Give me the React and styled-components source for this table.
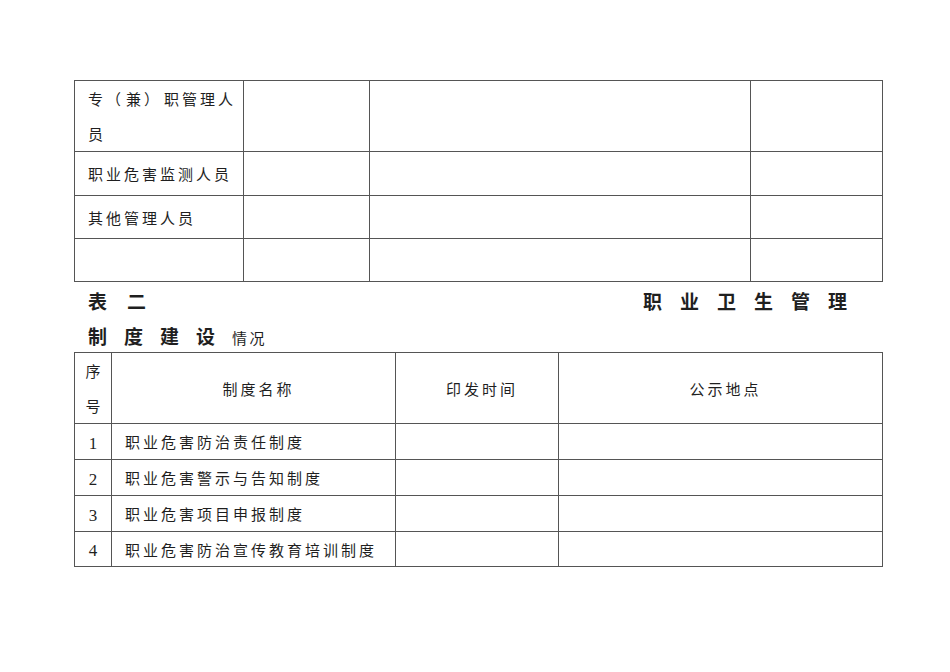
import React from 'react'
import styled, { createGlobalStyle } from 'styled-components'

const GlobalStyle = createGlobalStyle`
  html, body {
    margin: 0;
    background: #fff;
  }
  body {
    font-family: "Noto Sans CJK SC", "Liberation Sans", sans-serif;
    color: #1f1f1f;
  }
`;

const Page = styled.div`
  width: 950px;
  height: 672px;
  box-sizing: border-box;
  padding: 80px 0 0 74px;
`;

const Sheet = styled.div`
  width: 809px;
`;

const Grid = styled.div`
  display: grid;
  grid-template-columns: ${({ $cols }) => $cols};
  grid-template-rows: ${({ $rows }) => $rows};
  border-top: 1px solid #555;
  border-left: 1px solid #555;
`;

const Cell = styled.div`
  box-sizing: border-box;
  border-right: 1px solid #555;
  border-bottom: 1px solid #555;
  display: flex;
  align-items: center;
  justify-content: ${({ $center }) => ($center ? 'center' : 'flex-start')};
  text-align: ${({ $center }) => ($center ? 'center' : 'left')};
  padding-left: ${({ $indent = 13 }) => $indent}px;
  font-size: 15px;
  letter-spacing: 3px;
  line-height: 35px;
`;

const Num = styled(Cell)`
  font-family: "Liberation Serif", serif;
  font-size: 17px;
  letter-spacing: 0;
  padding-top: 3px;
`;

const Paren = styled.span`
  letter-spacing: 0;
  margin: 0 5px 0 0;
`;

const Heading = styled.div`
  height: 70px;
  box-sizing: border-box;
  padding: 1px 0 0 14px;
`;

const HeadLine = styled.div`
  display: flex;
  justify-content: ${({ $spread }) => ($spread ? 'space-between' : 'flex-start')};
  align-items: baseline;
  height: 35px;
  line-height: 35px;
  padding-right: 18px;
`;

const Strong = styled.span`
  font-weight: 700;
  font-size: 19px;
  letter-spacing: ${({ $ls }) => $ls}px;
`;

const Plain = styled.span`
  font-size: 15px;
  letter-spacing: 2.5px;
`;

const staff = ['职业危害监测人员', '其他管理人员', '']

const rules = [
  '职业危害防治责任制度',
  '职业危害警示与告知制度',
  '职业危害项目申报制度',
  '职业危害防治宣传教育培训制度',
]

const App = () => {
  return (
    <Page>
      <GlobalStyle />
      <Sheet>
        <Grid $cols="169px 126px 381px 132px" $rows="71px 44px 43px 43px">
          <Cell>
            <span>专<Paren>（</Paren>兼<Paren>）</Paren>职管理人<br />员</span>
          </Cell>
          <Cell />
          <Cell />
          <Cell />
          {staff.map((s, i) => (
            <React.Fragment key={i}>
              <Cell>{s}</Cell>
              <Cell />
              <Cell />
              <Cell />
            </React.Fragment>
          ))}
        </Grid>

        <Heading>
          <HeadLine $spread>
            <Strong $ls={20}>表二</Strong>
            <Strong $ls={18}>职业卫生管理</Strong>
          </HeadLine>
          <HeadLine>
            <Strong $ls={17}>制度建设</Strong>
            <Plain>情况</Plain>
          </HeadLine>
        </Heading>

        <Grid $cols="37px 284px 163px 324px" $rows="71px 36px 36px 36px 35px">
          <Cell $center $indent={3}>序<br />号</Cell>
          <Cell $center $indent={10}>制度名称</Cell>
          <Cell $center $indent={10}>印发时间</Cell>
          <Cell $center $indent={10}>公示地点</Cell>
          {rules.map((r, i) => (
            <React.Fragment key={r}>
              <Num $center $indent={0}>{i + 1}</Num>
              <Cell>{r}</Cell>
              <Cell />
              <Cell />
            </React.Fragment>
          ))}
        </Grid>
      </Sheet>
    </Page>
  )
}

export default App
